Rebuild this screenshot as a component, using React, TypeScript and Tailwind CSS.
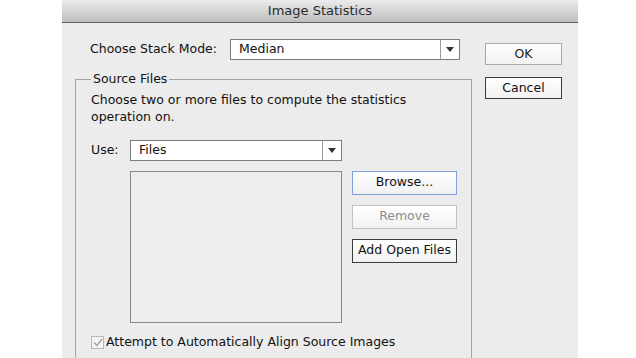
import React from 'react';

const font = { fontFamily: '"DejaVu Sans", "Liberation Sans", sans-serif' };

const Arrow = () => (
  <svg width="8" height="5" viewBox="0 0 8 5" className="text-[#333]">
    <path d="M0 0 H8 L4 5 Z" fill="currentColor" />
  </svg>
);

const Dropdown: React.FC<{ value: string; className: string }> = ({ value, className }) => (
  <div className={`flex h-[21px] border border-[#7c7c7c] bg-white ${className}`}>
    <div className="flex flex-1 items-center pl-[8px] text-[12.5px] text-[#111]">{value}</div>
    <div className="flex w-[19px] items-center justify-center border-l border-[#9a9a9a]">
      <Arrow />
    </div>
  </div>
);

type BtnProps = { label: string; tone?: 'plain' | 'focus' | 'dim' | 'strong'; className?: string };

const Button: React.FC<BtnProps> = ({ label, tone = 'plain', className = '' }) => {
  const tones = {
    plain: 'border border-[#a9a9a9] text-[#222]',
    focus: 'border border-[#7fa2dc] text-[#111]',
    dim: 'border border-[#c2c2c2] text-[#8e8e8e]',
    strong: 'border-[1.5px] border-[#3c3c3c] text-[#111]',
  };
  return (
    <button
      className={`flex items-center justify-center bg-gradient-to-b from-white to-[#f1f1f1] text-[12.5px] ${tones[tone]} ${className}`}
    >
      {label}
    </button>
  );
};

export default function App() {
  return (
    <div className="h-[358px] w-[636px] overflow-hidden bg-white" style={font}>
      <div className="ml-[62px] flex h-full w-[516px] flex-col bg-[#ececec]">
        <div className="flex h-[23px] shrink-0 items-center justify-center border-b border-[#5f5f5f] bg-gradient-to-b from-[#ececec] to-[#bdbdbd] text-[13px] text-[#2b2b2b]">
          Image Statistics
        </div>

        <div className="flex flex-1">
          {/* left column */}
          <div className="flex w-[410px] flex-col pt-[16px]">
            <div className="flex items-center pl-[28px]">
              <span className="w-[140px] text-[12.5px] text-[#111]">Choose Stack Mode:</span>
              <Dropdown value="Median" className="w-[230px]" />
            </div>

            <fieldset className="ml-[13px] mt-[10px] w-[397px] flex-1 border border-b-0 border-[#a4a4a4] pl-[15px] pr-[10px]">
              <legend className="px-[2px] text-[12.5px] text-[#111]">Source Files</legend>
              <p className="mt-[2px] text-[12.5px] leading-[17px] text-[#111]">
                Choose two or more files to compute the statistics
                <br />
                operation on.
              </p>
              <div className="mt-[15px] flex items-center">
                <span className="w-[39px] text-[12.5px] text-[#111]">Use:</span>
                <Dropdown value="Files" className="w-[212px]" />
              </div>
              <div className="mt-[10px] flex gap-[10px]">
                <div className="ml-[39px] h-[152px] w-[212px] border border-[#8a8a8a] bg-[#ededed]" />
                <div className="flex flex-col gap-[10px]">
                  <Button label="Browse..." tone="focus" className="h-[24px] w-[105px]" />
                  <Button label="Remove" tone="dim" className="h-[24px] w-[105px]" />
                  <Button label="Add Open Files" tone="strong" className="h-[24px] w-[105px]" />
                </div>
              </div>
              <div className="mt-[10px] flex items-center gap-[2px]">
                <div className="flex h-[13px] w-[13px] items-center justify-center border border-[#b8b8b8] bg-[#f4f4f4]">
                  <svg width="10" height="9" viewBox="0 0 10 9">
                    <path d="M1 4.5 L4 7.5 L9 1" stroke="#a8a8a8" strokeWidth="1.6" fill="none" />
                  </svg>
                </div>
                <span className="text-[12.5px] text-[#111]">Attempt to Automatically Align Source Images</span>
              </div>
            </fieldset>
          </div>

          {/* right column */}
          <div className="flex flex-col gap-[12px] pl-[13px] pt-[20px]">
            <Button label="OK" className="h-[22px] w-[77px]" />
            <Button label="Cancel" tone="strong" className="h-[22px] w-[77px]" />
          </div>
        </div>
      </div>
    </div>
  );
}
